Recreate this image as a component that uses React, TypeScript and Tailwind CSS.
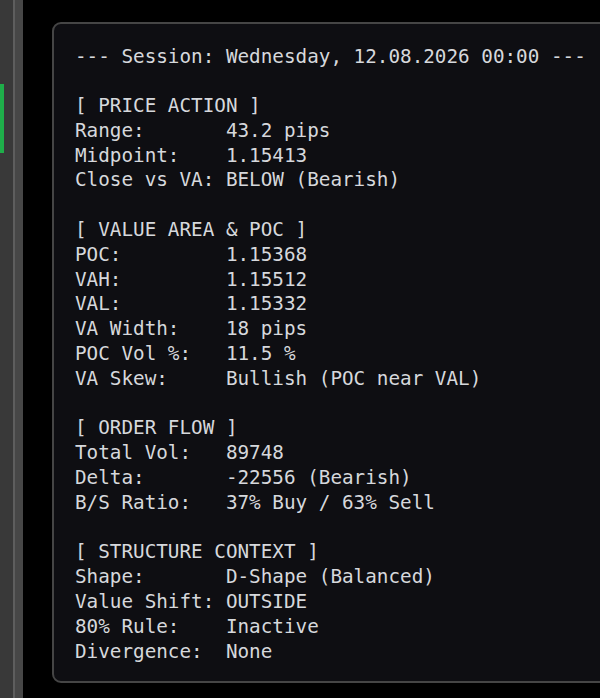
import React from "react";

const report = `--- Session: Wednesday, 12.08.2026 00:00 ---

[ PRICE ACTION ]
Range:       43.2 pips
Midpoint:    1.15413
Close vs VA: BELOW (Bearish)

[ VALUE AREA & POC ]
POC:         1.15368
VAH:         1.15512
VAL:         1.15332
VA Width:    18 pips
POC Vol %:   11.5 %
VA Skew:     Bullish (POC near VAL)

[ ORDER FLOW ]
Total Vol:   89748
Delta:       -22556 (Bearish)
B/S Ratio:   37% Buy / 63% Sell

[ STRUCTURE CONTEXT ]
Shape:       D-Shape (Balanced)
Value Shift: OUTSIDE
80% Rule:    Inactive
Divergence:  None`;

const App = () => {
  return (
    <div className="flex h-[698px] w-[600px] overflow-hidden bg-black">
      {/* левая полоса */}
      <div className="flex h-full shrink-0">
        <div className="flex h-full w-[4px] flex-col bg-[#393939]">
          <div className="h-[84px]" />
          <div className="h-[69px] bg-[#1fae4a]" />
        </div>
        <div className="h-full w-[9px] bg-[#393939]" />
        <div className="h-full w-[2px] bg-[#5e5e5e]" />
        <div className="h-full w-[8px] bg-[#474747]" />
      </div>

      {/* карточка отчёта */}
      <div className="ml-[29px] mt-[22px] h-[661px] w-[600px] shrink-0 rounded-[9px] border-2 border-[#454545] bg-[#0e0e12] pl-[21px] pt-[20.5px]">
        <pre
          className="text-[19.3px] leading-[24.8px] text-[#d6d8dc]"
          style={{ fontFamily: '"DejaVu Sans Mono", "Liberation Mono", monospace' }}
        >
          {report}
        </pre>
      </div>
    </div>
  );
};

export default App;
